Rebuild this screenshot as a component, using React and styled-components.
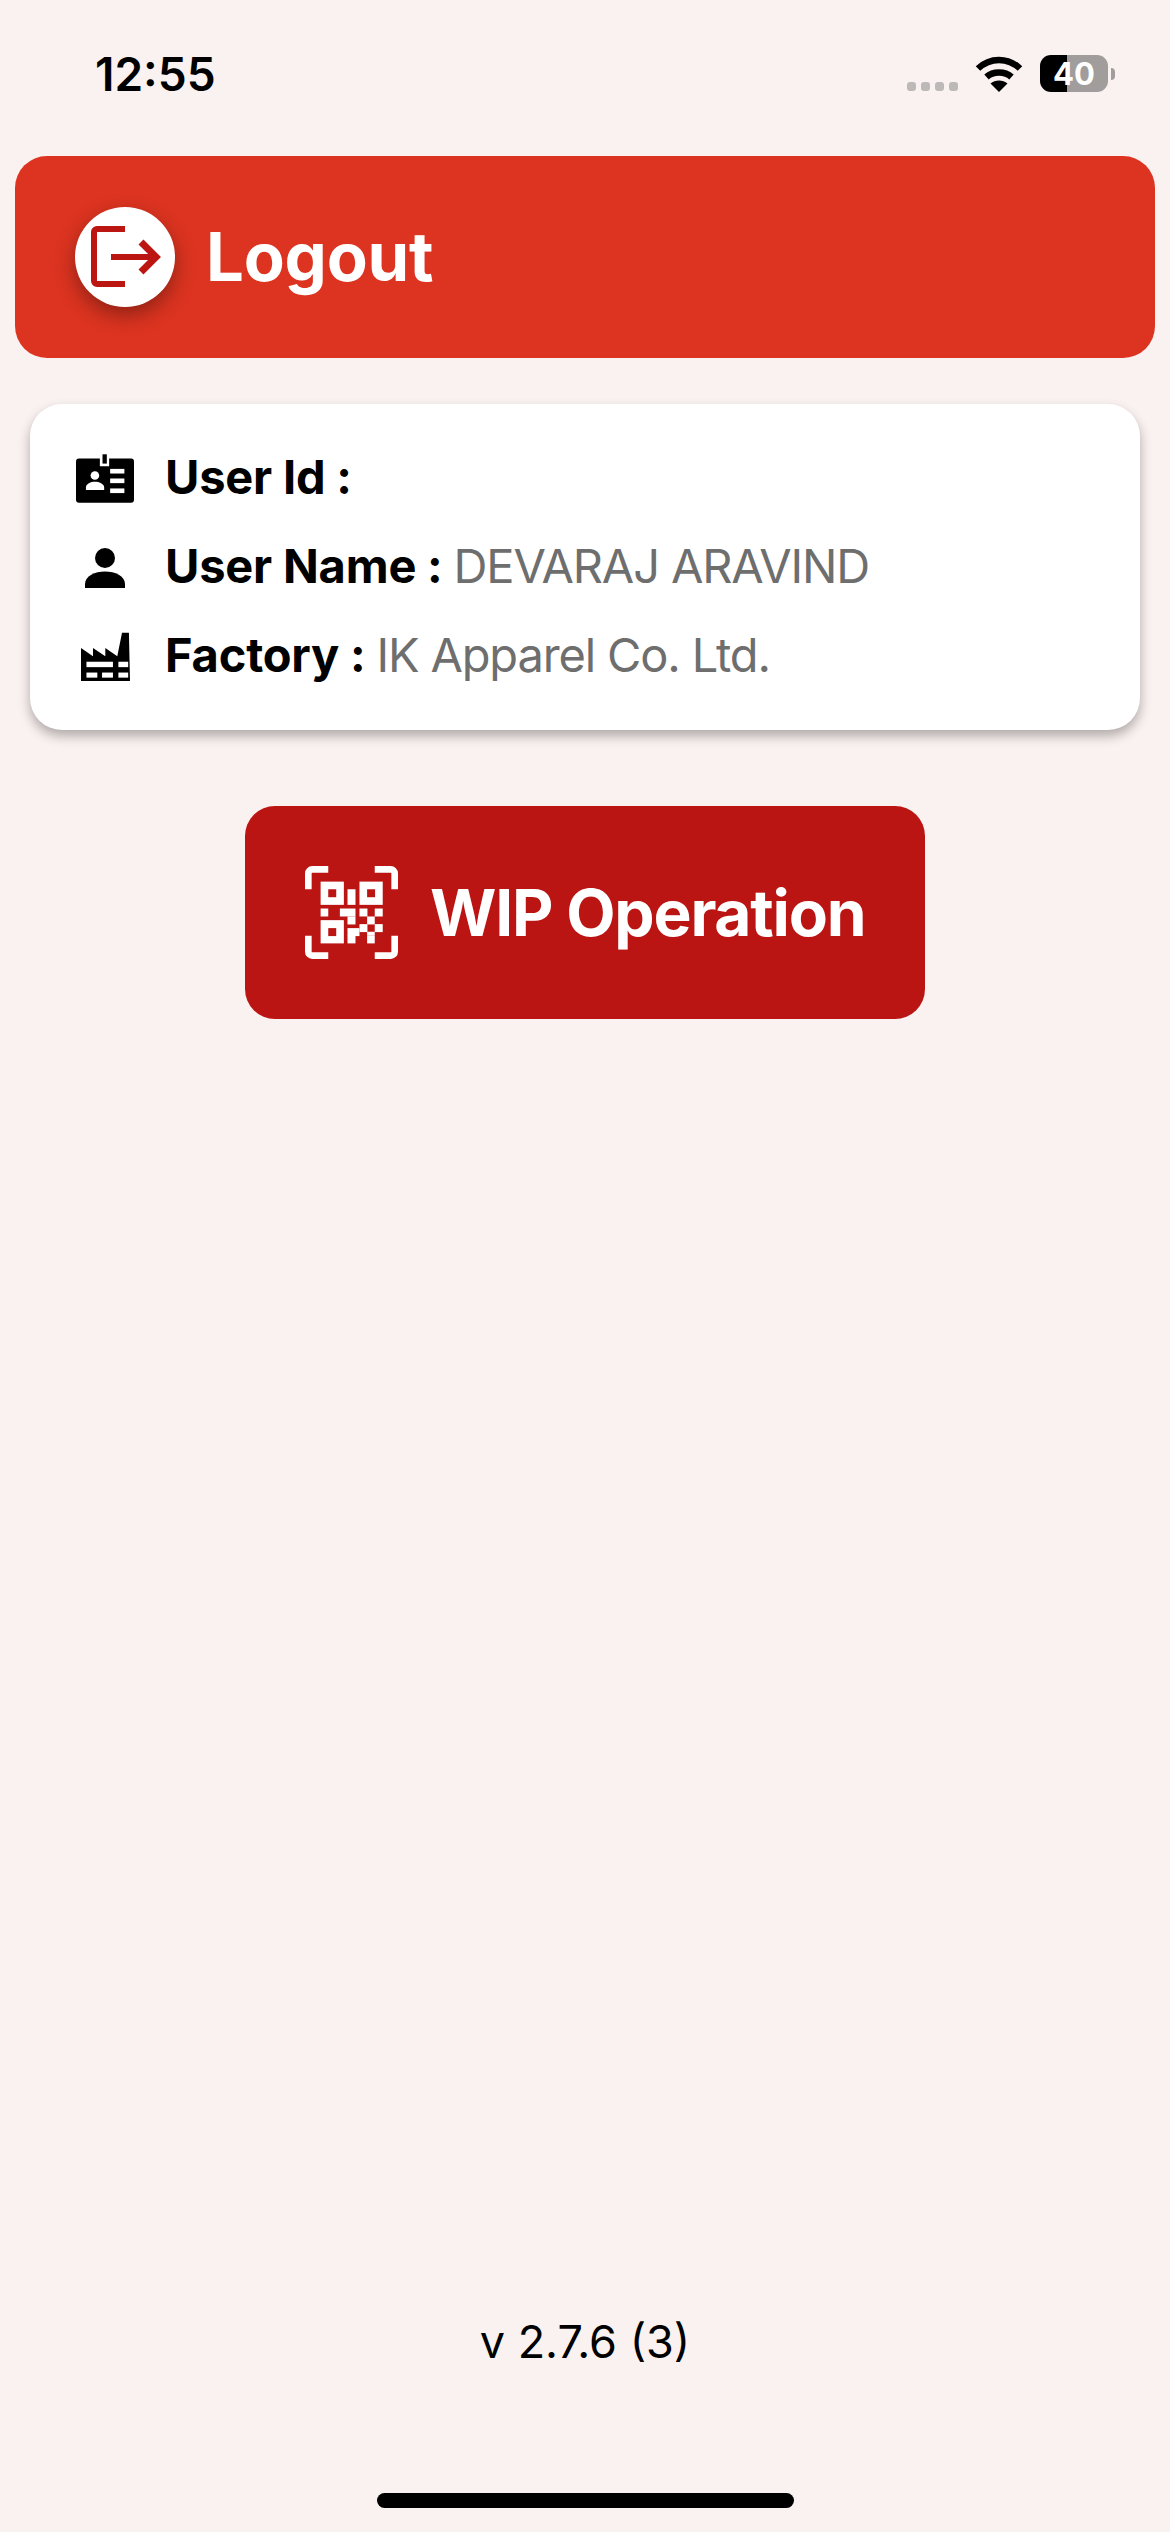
import React from 'react'
import styled, { createGlobalStyle } from 'styled-components'

const GlobalStyle = createGlobalStyle`
html, body {
    margin: 0;
    padding: 0;
    background: #faf2f0;
}
* {
    box-sizing: border-box;
}
`

const Screen = styled.div`
    width: 1170px;
    height: 2532px;
    display: flex;
    flex-direction: column;
    background: #faf2f0;
    font-family: Inter, 'Liberation Sans', sans-serif;
    color: #000;
`

const StatusBar = styled.div`
    height: 156px;
    flex: none;
    display: flex;
    justify-content: space-between;
    align-items: flex-start;
    padding: 55px 55px 0 95px;
`

const Clock = styled.span`
    font-size: 46px;
    font-weight: 600;
    line-height: 38px;
`

const StatusIcons = styled.div`
    display: flex;
    align-items: flex-end;
    gap: 17px;
`

const SignalDots = styled.div`
    display: flex;
    gap: 5px;
    padding-bottom: 1px;
`

const SignalDot = styled.i`
    width: 9px;
    height: 9px;
    border-radius: 3px;
    background: #bdb9b8;
`

const Battery = styled.div`
    position: relative;
    width: 68px;
    height: 37px;
    border-radius: 11px;
    overflow: hidden;
    background: linear-gradient(90deg, #000 27px, #a09d9c 27px);
    color: #fff;
    font-size: 31px;
    font-weight: 700;
    line-height: 37px;
    text-align: center;
`

const BatteryWrap = styled.div`
    display: flex;
    align-items: center;
    gap: 3px;
`

const BatteryNub = styled.i`
    width: 4px;
    height: 12px;
    border-radius: 0 6px 6px 0;
    background: #a09d9c;
`

const LogoutBar = styled.div`
    height: 202px;
    flex: none;
    margin: 0 15px;
    padding-left: 60px;
    display: flex;
    align-items: center;
    gap: 31px;
    border-radius: 32px;
    background: #dc3420;
    color: #fff;
`

const LogoutCircle = styled.div`
    width: 100px;
    height: 100px;
    border-radius: 50%;
    background: #fff;
    box-shadow: 0 8px 20px rgba(0, 0, 0, 0.35);
`

const LogoutLabel = styled.span`
    font-size: 67px;
    font-weight: 700;
    letter-spacing: -0.2px;
    line-height: 80px;
`

const InfoCard = styled.div`
    margin: 46px 30px 0;
    padding: 30px 45px 29px;
    border-radius: 32px;
    background: #fff;
    box-shadow: 0 6px 12px rgba(0, 0, 0, 0.3);
`

const InfoRow = styled.div`
    height: 89px;
    display: flex;
    align-items: center;
    gap: 30px;
    font-size: 47px;
`

const IconSlot = styled.div`
    width: 60px;
    display: flex;
    justify-content: center;
    align-items: center;
`

const InfoText = styled.span`
    padding-bottom: 5px;
`

const InfoLabel = styled.span`
    font-weight: 700;
    letter-spacing: -0.2px;
`

const InfoValue = styled.span`
    color: #6e6e6e;
    font-weight: 400;
    letter-spacing: -1.15px;
`

const WipButton = styled.div`
    width: 680px;
    height: 213px;
    margin: 76px auto 0;
    padding-left: 60px;
    display: flex;
    align-items: center;
    gap: 32px;
    border-radius: 30px;
    background: #ba1513;
    color: #fff;
    font-size: 64px;
    font-weight: 700;
    letter-spacing: -1.2px;
`

const Version = styled.div`
    margin-top: auto;
    text-align: center;
    font-size: 45px;
    line-height: 60px;
`

const HomeBar = styled.div`
    width: 417px;
    height: 15px;
    margin: 121px auto 24px;
    border-radius: 8px;
    background: #000;
`

const WifiIcon = () => (
    <svg width="48" height="37" viewBox="0 0 48 37">
        <path d="M3 13.5C15 2 33 2 45 13.5" fill="none" stroke="#000" strokeWidth="6.5" />
        <path d="M11.5 22C18 16 30 16 36.5 22" fill="none" stroke="#000" strokeWidth="6.5" />
        <path d="M24 37L15.5 28.5C20 24.5 28 24.5 32.5 28.5Z" fill="#000" />
    </svg>
)

const LogoutIcon = () => (
    <svg width="100" height="100" viewBox="0 0 100 100">
        <path d="M50 22H22a3 3 0 0 0-3 3V74a3 3 0 0 0 3 3H50" fill="none" stroke="#bc1613" strokeWidth="6" />
        <path d="M36 50H79" fill="none" stroke="#bc1613" strokeWidth="6" />
        <path d="M66 35L81 50L66 65" fill="none" stroke="#bc1613" strokeWidth="7" />
    </svg>
)

const BadgeIcon = () => (
    <svg width="58" height="49" viewBox="15 14 175 146">
        <rect x="15" y="27" width="175" height="133" rx="9" fill="#000" />
        <rect x="87" y="14" width="28" height="36" fill="#fff" />
        <rect x="95" y="14" width="13" height="28" fill="#000" />
        <rect x="118" y="58" width="43" height="14" fill="#fff" />
        <rect x="118" y="87" width="43" height="14" fill="#fff" />
        <rect x="118" y="117" width="43" height="14" fill="#fff" />
        <circle cx="72" cy="78" r="13" fill="#fff" />
        <path d="M45 122V114C45 103 60 97 72 97S100 103 100 114V122Z" fill="#fff" />
    </svg>
)

const PersonIcon = () => (
    <svg width="40" height="40" viewBox="0 0 40 40">
        <circle cx="20" cy="10" r="10" fill="#000" />
        <path d="M0 40V36C0 28 10 23.500 20 23.500S40 28 40 36V40Z" fill="#000" />
    </svg>
)

const FactoryIcon = () => (
    <svg width="49" height="49" viewBox="30 20 135 145" preserveAspectRatio="none">
        <path d="M30 67L63 92V67L97 92V67L130 92L143 22H162L165 165H30Z" fill="#000" />
        <rect x="45" y="108" width="73" height="16" fill="#fff" />
        <rect x="133" y="108" width="27" height="16" fill="#fff" />
        <rect x="45" y="140" width="30" height="15" fill="#fff" />
        <rect x="88" y="140" width="30" height="15" fill="#fff" />
        <rect x="133" y="140" width="27" height="15" fill="#fff" />
    </svg>
)

const qrCells = [
    [77, 77, 70, 70], [194, 77, 70, 70], [77, 193, 70, 70],
    [158, 100, 24, 47], [77, 158, 23, 24], [135, 158, 47, 24],
    [158, 182, 24, 24], [194, 158, 24, 24], [240, 158, 24, 24],
    [217, 182, 23, 24], [194, 205, 24, 24], [240, 205, 24, 24],
    [158, 217, 36, 24], [217, 228, 23, 12], [158, 240, 24, 23],
    [217, 240, 23, 23],
]

const qrHoles = [[100, 100], [217, 100], [100, 217]]

const QrIcon = () => (
    <svg width="93" height="93" viewBox="30 30 280 280">
        <g fill="none" stroke="#fff" strokeWidth="20">
            <path d="M100 40H52a12 12 0 0 0-12 12V100" />
            <path d="M240 40H288a12 12 0 0 1 12 12V100" />
            <path d="M40 240V288a12 12 0 0 0 12 12H100" />
            <path d="M300 240V288a12 12 0 0 1-12 12H240" />
        </g>
        {qrCells.map(([x, y, w, h], index) => <rect key={index} x={x} y={y} width={w} height={h} fill="#fff" />)}
        {qrHoles.map(([x, y], index) => <rect key={index} x={x} y={y} width="24" height="24" fill="#ba1513" />)}
    </svg>
)

function App() {
    return (
        <Screen>
            <GlobalStyle />
            <StatusBar>
                <Clock>12:55</Clock>
                <StatusIcons>
                    <SignalDots>
                        <SignalDot /><SignalDot /><SignalDot /><SignalDot />
                    </SignalDots>
                    <WifiIcon />
                    <BatteryWrap>
                        <Battery>40</Battery>
                        <BatteryNub />
                    </BatteryWrap>
                </StatusIcons>
            </StatusBar>
            <LogoutBar>
                <LogoutCircle><LogoutIcon /></LogoutCircle>
                <LogoutLabel>Logout</LogoutLabel>
            </LogoutBar>
            <InfoCard>
                <InfoRow>
                    <IconSlot><BadgeIcon /></IconSlot>
                    <InfoText><InfoLabel>User Id :</InfoLabel></InfoText>
                </InfoRow>
                <InfoRow>
                    <IconSlot><PersonIcon /></IconSlot>
                    <InfoText><InfoLabel>User Name : </InfoLabel><InfoValue>DEVARAJ ARAVIND</InfoValue></InfoText>
                </InfoRow>
                <InfoRow>
                    <IconSlot><FactoryIcon /></IconSlot>
                    <InfoText><InfoLabel>Factory : </InfoLabel><InfoValue>IK Apparel Co. Ltd.</InfoValue></InfoText>
                </InfoRow>
            </InfoCard>
            <WipButton>
                <QrIcon />
                WIP Operation
            </WipButton>
            <Version>v 2.7.6 (3)</Version>
            <HomeBar />
        </Screen>
    )
}

export default App
